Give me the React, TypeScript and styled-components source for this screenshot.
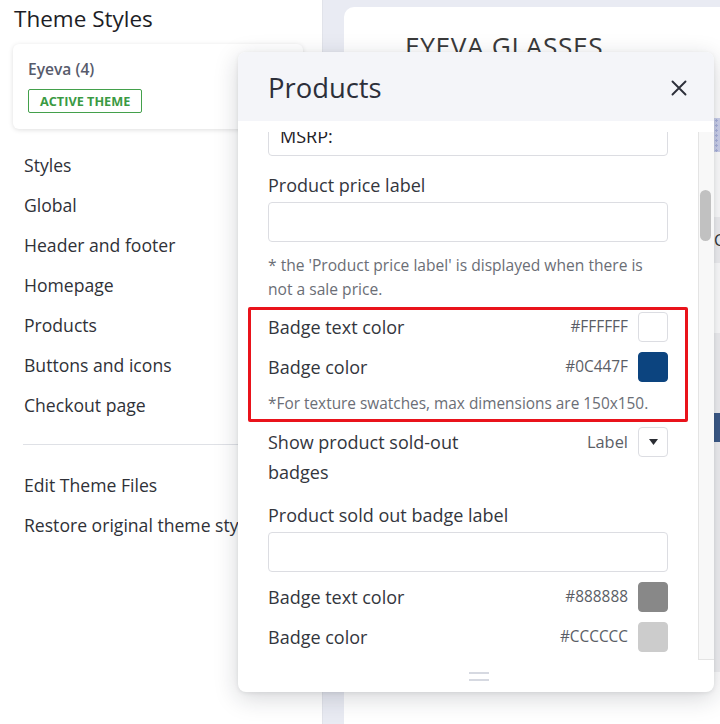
import React from "react";
import styled, { createGlobalStyle } from "styled-components";

const GlobalStyle = createGlobalStyle`
  html, body { margin: 0; padding: 0; }
  body {
    width: 720px;
    height: 724px;
    overflow: hidden;
    background: #ffffff;
    font-family: "Open Sans", "Noto Sans", sans-serif;
  }
  * { box-sizing: border-box; }
`;

const Page = styled.div`
  position: relative;
  display: flex;
  width: 720px;
  height: 724px;
  overflow: hidden;
`;

/* ---------- Sidebar ---------- */
const Sidebar = styled.aside`
  width: 323px;
  flex-shrink: 0;
  background: #ffffff;
  border-right: 1px solid #e1e3ea;
  padding: 4px 19px 0 13px;
  display: flex;
  flex-direction: column;
`;

const SidebarTitle = styled.h1`
  margin: 0;
  padding-left: 1px;
  font-size: 22.5px;
  font-weight: 400;
  line-height: 30px;
  color: #1d1e26;
`;

const ThemeCard = styled.div`
  margin-top: 10px;
  height: 85px;
  padding: 14px 15px;
  background: #ffffff;
  border-radius: 6px;
  box-shadow: 0 1px 5px rgba(0, 0, 0, 0.13);
  display: flex;
  flex-direction: column;
  align-items: flex-start;
`;

const ThemeName = styled.div`
  font-size: 15.6px;
  font-weight: 600;
  line-height: 22px;
  color: #575b6c;
`;

const ActiveBadge = styled.span`
  margin-top: 9px;
  height: 24px;
  display: inline-flex;
  align-items: center;
  padding: 0 11px;
  border: 1px solid #43a04b;
  border-radius: 2px;
  color: #3a9a43;
  font-size: 12.7px;
  font-weight: 700;
`;

const NavList = styled.nav<{ $top: number }>`
  margin-top: ${(p) => p.$top}px;
  display: flex;
  flex-direction: column;
`;

const NavItem = styled.a`
  height: 40px;
  line-height: 40px;
  padding-left: 11px;
  font-size: 17.6px;
  color: #2f3138;
  white-space: nowrap;
  text-decoration: none;
`;

const Divider = styled.hr`
  margin: 19px 0 0 10px;
  border: none;
  height: 1px;
  background: #dfe1e6;
`;

/* ---------- Preview ---------- */
const Main = styled.main`
  flex: 1;
  min-width: 0;
  background: #e9ebf3;
  padding: 7px 0 0 21px;
  overflow: hidden;
  display: flex;
`;

const PreviewCard = styled.div`
  width: 440px;
  flex-shrink: 0;
  height: 100%;
  background: #ffffff;
  border-radius: 10px 10px 0 0;
  padding-top: 23px;
  display: flex;
  flex-direction: column;
`;

const StoreTitle = styled.div`
  padding-left: 61px;
  font-size: 26.3px;
  line-height: 32px;
  letter-spacing: 0.6px;
  color: #3a3a3a;
`;

const Banner = styled.div`
  margin-top: 56px;
  height: 34px;
  background-color: #cdd2ec;
  background-image: radial-gradient(#aab2dc 1px, transparent 1.2px);
  background-size: 5px 5px;
`;

const NavStrip = styled.div`
  margin-top: 65px;
  height: 46px;
  background: #f1f1f3;
  display: flex;
  align-items: center;
  padding-left: 370px;
  font-size: 16px;
  color: #333;
`;

const ProductArea = styled.div`
  margin-top: 70px;
  height: 80px;
  background: #f1f1f3;
`;

const ProductBar = styled.div`
  height: 29px;
  background: #3c5a88;
`;

const ProductRest = styled.div`
  height: 230px;
  background: #f1f1f3;
`;

/* ---------- Modal ---------- */
const Modal = styled.section`
  position: absolute;
  left: 238px;
  top: 52px;
  width: 476px;
  height: 640px;
  background: #ffffff;
  border-radius: 8px;
  box-shadow: 0 6px 24px rgba(20, 25, 45, 0.18), 0 1px 4px rgba(0, 0, 0, 0.08);
  display: flex;
  flex-direction: column;
  overflow: hidden;
`;

const ModalHeader = styled.header`
  height: 69px;
  flex-shrink: 0;
  background: #f4f5f9;
  display: flex;
  align-items: center;
  justify-content: space-between;
  padding: 2px 27px 0 30px;
`;

const ModalTitle = styled.h2`
  margin: 0;
  font-size: 27.4px;
  font-weight: 400;
  line-height: 1;
  color: #2c2f3a;
`;

const CloseButton = styled.button`
  width: 16px;
  height: 16px;
  padding: 0;
  border: none;
  background: none;
  display: flex;
  cursor: pointer;
`;

const ModalBody = styled.div`
  flex: 1;
  padding-top: 11px;
  display: flex;
  flex-direction: column;
`;

const Scroller = styled.div`
  height: 528px;
  display: flex;
`;

const ScrollContent = styled.div`
  flex: 1;
  overflow: hidden;
  padding: 0 30px;
`;

const ScrollInner = styled.div<{ $offset: number }>`
  margin-top: ${(p) => -p.$offset}px;
  display: flex;
  flex-direction: column;
`;

const Track = styled.div`
  width: 16px;
  flex-shrink: 0;
  background: #f8f8f8;
  border-left: 1px solid #e4e4e4;
  border-bottom: 1px solid #e4e4e4;
  padding: 58px 0 0 1px;
`;

const Thumb = styled.div`
  width: 11px;
  height: 51px;
  border-radius: 6px;
  background: #c1c1c1;
`;

const ModalFooter = styled.footer`
  height: 32px;
  flex-shrink: 0;
  display: flex;
  align-items: center;
  justify-content: center;
  padding-left: 6px;
`;

const Handle = styled.div`
  width: 20px;
  height: 9px;
  border-top: 2px solid #d6d9e1;
  border-bottom: 2px solid #d6d9e1;
`;

/* ---------- Form parts ---------- */
const FieldLabel = styled.label<{ $mt: number }>`
  margin-top: ${(p) => p.$mt}px;
  font-size: 18px;
  line-height: 24px;
  color: #33363d;
`;

const TextInput = styled.input<{ $mt: number }>`
  margin-top: ${(p) => p.$mt}px;
  height: 40px;
  width: 100%;
  border: 1px solid #dcdde2;
  border-radius: 4px;
  padding: 0 11px;
  font-family: inherit;
  font-size: 18px;
  color: #1e2026;
  background: #fff;
  outline: none;
`;

const HelpText = styled.p<{ $mt: number; $size: number }>`
  margin: ${(p) => p.$mt}px 0 0;
  font-size: ${(p) => p.$size}px;
  line-height: 24px;
  color: #6b6e76;
`;

const Highlight = styled.div`
  margin: 6px -20px 0;
  padding: 0 17px 3px;
  border: 3px solid #e9131b;
  border-radius: 2px;
  display: flex;
  flex-direction: column;
`;

const Row = styled.div<{ $mt: number }>`
  margin-top: ${(p) => p.$mt}px;
  min-height: 34px;
  display: flex;
  align-items: center;
  justify-content: space-between;
`;

const TopRow = styled(Row)`
  align-items: flex-start;
`;

const RowLabel = styled.span<{ $width?: number }>`
  font-size: 18px;
  line-height: 30px;
  color: #33363d;
  ${(p) => (p.$width ? `width: ${p.$width}px;` : "")}
`;

const Control = styled.div`
  display: flex;
  align-items: center;
  gap: 10px;
`;

const HexValue = styled.span<{ $size: number }>`
  font-size: ${(p) => p.$size}px;
  line-height: 30px;
  color: #5b5e66;
`;

const Swatch = styled.span<{ $color: string }>`
  width: 30px;
  height: 30px;
  border-radius: 4px;
  background: ${(p) => p.$color};
  border: 1px solid ${(p) => (p.$color.toUpperCase() === "#FFFFFF" ? "#dcdde2" : p.$color)};
`;

const SelectButton = styled.button`
  width: 30px;
  height: 30px;
  padding: 0;
  border: 1px solid #dcdde2;
  border-radius: 4px;
  background: #fff;
  display: flex;
  align-items: center;
  justify-content: center;
`;

const ColorRow = ({ label, value, mt }: { label: string; value: string; mt: number }) => (
  <Row $mt={mt}>
    <RowLabel>{label}</RowLabel>
    <Control>
      <HexValue $size={15.4}>{value}</HexValue>
      <Swatch $color={value} />
    </Control>
  </Row>
);

const CloseIcon = () => (
  <svg width="16" height="16" viewBox="0 0 16 16" fill="none">
    <path d="M1.5 1.5 14.5 14.5M14.5 1.5 1.5 14.5" stroke="#2c2f3a" strokeWidth="1.9" strokeLinecap="round" />
  </svg>
);

const CaretIcon = () => (
  <svg width="9" height="6" viewBox="0 0 9 6">
    <path d="M0 0h9L4.5 6z" fill="#2b2d33" />
  </svg>
);

export default function App() {
  return (
    <>
      <GlobalStyle />
      <Page>
        <Sidebar>
          <SidebarTitle>Theme Styles</SidebarTitle>
          <ThemeCard>
            <ThemeName>Eyeva (4)</ThemeName>
            <ActiveBadge>ACTIVE THEME</ActiveBadge>
          </ThemeCard>
          <NavList $top={16}>
            {["Styles", "Global", "Header and footer", "Homepage", "Products", "Buttons and icons", "Checkout page"].map(
              (item) => (
                <NavItem key={item}>{item}</NavItem>
              )
            )}
          </NavList>
          <Divider />
          <NavList $top={20}>
            <NavItem>Edit Theme Files</NavItem>
            <NavItem>Restore original theme styles</NavItem>
          </NavList>
        </Sidebar>

        <Main>
          <PreviewCard>
            <StoreTitle>EYEVA GLASSES</StoreTitle>
            <Banner />
            <NavStrip>Cart</NavStrip>
            <ProductArea />
            <ProductBar />
            <ProductRest />
          </PreviewCard>
        </Main>

        <Modal>
          <ModalHeader>
            <ModalTitle>Products</ModalTitle>
            <CloseButton aria-label="Close">
              <CloseIcon />
            </CloseButton>
          </ModalHeader>
          <ModalBody>
            <Scroller>
              <ScrollContent>
                <ScrollInner $offset={16}>
                  <TextInput $mt={0} defaultValue="MSRP:" />
                  <FieldLabel $mt={17}>Product price label</FieldLabel>
                  <TextInput $mt={5} />
                  <HelpText $mt={11} $size={15.6}>
                    * the 'Product price label' is displayed when there is not a sale price.
                  </HelpText>
                  <Highlight>
                    <ColorRow label="Badge text color" value="#FFFFFF" mt={0} />
                    <ColorRow label="Badge color" value="#0C447F" mt={6} />
                    <HelpText $mt={8} $size={15.4}>
                      *For texture swatches, max dimensions are 150x150.
                    </HelpText>
                  </Highlight>
                  <TopRow $mt={5}>
                    <RowLabel $width={200}>Show product sold-out badges</RowLabel>
                    <Control>
                      <HexValue $size={16.4}>Label</HexValue>
                      <SelectButton aria-label="Choose">
                        <CaretIcon />
                      </SelectButton>
                    </Control>
                  </TopRow>
                  <FieldLabel $mt={16}>Product sold out badge label</FieldLabel>
                  <TextInput $mt={5} />
                  <ColorRow label="Badge text color" value="#888888" mt={8} />
                  <ColorRow label="Badge color" value="#CCCCCC" mt={6} />
                </ScrollInner>
              </ScrollContent>
              <Track>
                <Thumb />
              </Track>
            </Scroller>
          </ModalBody>
          <ModalFooter>
            <Handle />
          </ModalFooter>
        </Modal>
      </Page>
    </>
  );
}
